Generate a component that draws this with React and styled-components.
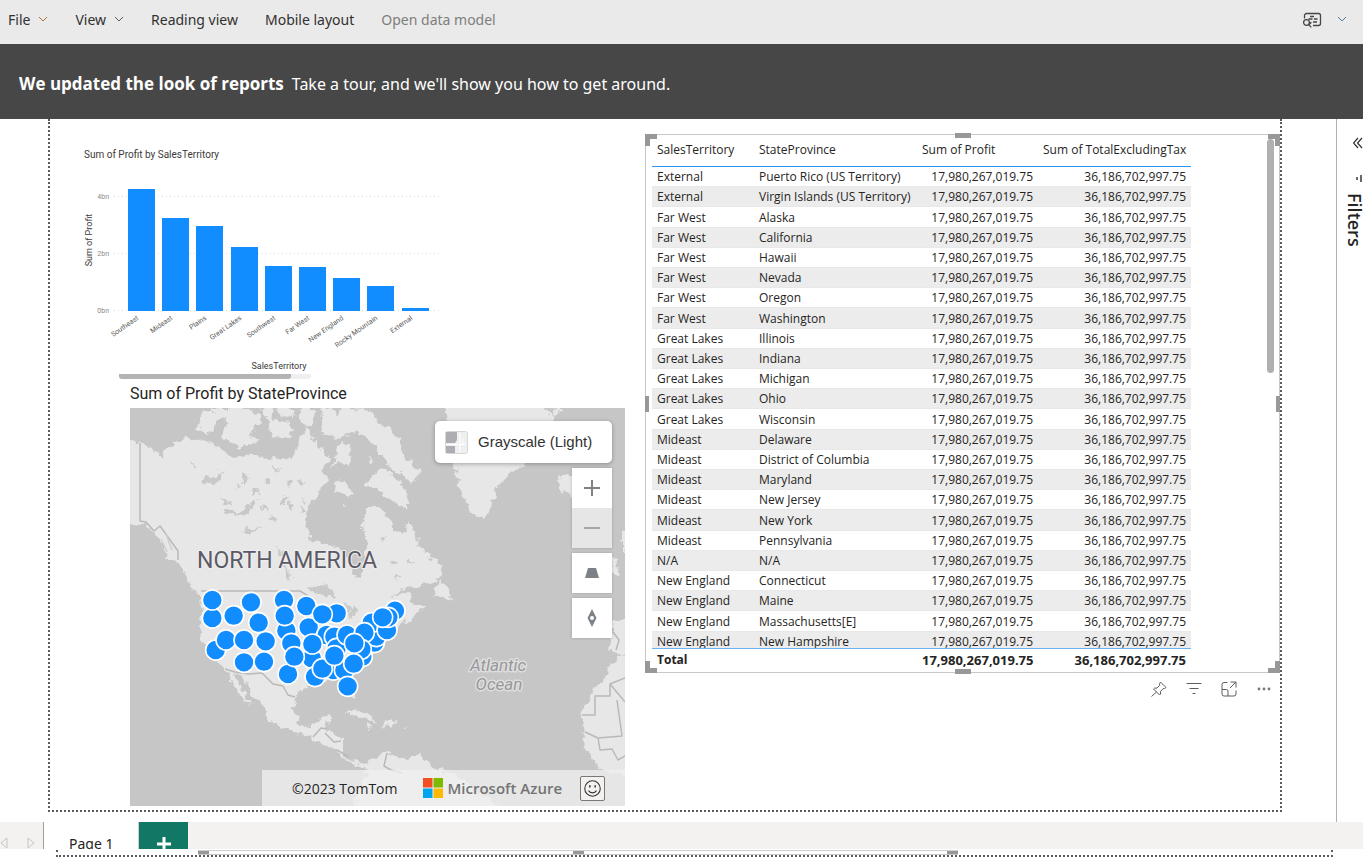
import React from "react";
import styled, { createGlobalStyle, css } from "styled-components";

const GlobalStyle = createGlobalStyle`
  *, *::before, *::after { box-sizing: border-box; }
  body { margin: 0; background: #fff; color: #252423; font-family: "Open Sans", "Noto Sans", sans-serif; font-size: 12px; }
  button { font: inherit; color: inherit; border: 0; background: none; padding: 0; margin: 0; cursor: pointer; }
  svg { display: block; }
`;

const DIN = `Roboto, "Liberation Sans", sans-serif`;
const UI = `"Noto Sans", "Open Sans", sans-serif`;

const App_ = styled.div`
  min-height: 100vh;
  display: flex;
  flex-direction: column;
  overflow: hidden;
`;

/* ---------- menu bar and banner ---------- */
const MenuBar = styled.nav`
  height: 44px;
  flex: none;
  display: flex;
  align-items: center;
  gap: 27px;
  padding: 0 16px 4px 8px;
  background: #eaeaea;
`;
const MenuButton = styled.button`
  display: flex;
  align-items: center;
  gap: 8px;
  font: 400 14px/20px ${UI};
  white-space: nowrap;
  color: ${(p) => (p.$muted ? "#7f7e7c" : "#323130")};
`;
const MenuTools = styled.div`
  margin-left: auto;
  display: flex;
  align-items: center;
  gap: 15px;
`;
const Banner = styled.section`
  height: 75px;
  flex: none;
  display: flex;
  align-items: center;
  gap: 8px;
  padding: 4px 19px 0;
  background: #474747;
  color: #fff;
  font: 400 16px/24px ${UI};
  white-space: nowrap;
`;
const BannerTitle = styled.strong`
  font: 700 17px/24px "Open Sans", sans-serif;
`;

/* ---------- workspace ---------- */
const Workspace = styled.main`
  flex: none;
  display: flex;
  height: 703px;
`;
const CanvasArea = styled.div`
  flex: 1;
  min-width: 0;
  padding: 0 54px 10px 48px;
`;
const ReportPage = styled.div`
  height: 100%;
  border: 2px dotted #5b5b5b;
  border-top: 0;
  display: grid;
  grid-template-columns: minmax(0, 595fr) minmax(0, 635fr);
`;
const LeftColumn = styled.div`
  padding: 28px 20px 5px 34px;
`;
const ChartTitle = styled.h2`
  margin: 0;
  font: 400 10px/16px ${DIN};
  color: #3b3a39;
`;
const ChartSvg = styled.svg`
  width: 356px;
  height: 211px;
  font-family: ${DIN};
`;
const HScroll = styled.div`
  width: 192px;
  height: 5px;
  margin-left: 35px;
  border-radius: 0 0 3px 3px;
  background: #efefef;
`;
const HThumb = styled.div`
  width: 172px;
  height: 5px;
  border-radius: 0 0 3px 3px;
  background: #b3b3b3;
`;
const MapVisual = styled.section`
  padding: 5px 0 0 46px;
`;
const MapTitle = styled.h2`
  margin: 0 0 4px;
  font: 400 16px/20px ${DIN};
  color: #252423;
`;
const MapFrame = styled.div`
  position: relative;
  height: 398px;
  overflow: hidden;
  background: #c6c6c6;
`;
const MapSvg = styled.svg`
  width: 100%;
  height: 100%;
  font-family: Roboto, sans-serif;
`;
const MapControls = styled.div`
  position: absolute;
  top: 13px;
  right: 13px;
  display: flex;
  flex-direction: column;
  align-items: flex-end;
  gap: 5px;
`;
const StyleButton = styled.button`
  display: flex;
  align-items: center;
  gap: 10px;
  height: 42px;
  width: 177px;
  padding: 0 10px;
  border-radius: 5px;
  background: #fff;
  box-shadow: 0 1px 4px rgba(0, 0, 0, 0.3);
  font: 400 15px/20px "Liberation Sans", sans-serif;
  color: #333;
`;
const ControlGroup = styled.div`
  width: 40px;
  box-shadow: 0 0 3px rgba(0, 0, 0, 0.2);
`;
const ControlButton = styled.button`
  width: 40px;
  height: 40px;
  display: flex;
  align-items: center;
  justify-content: center;
  background: ${(p) => (p.$off ? "#e6e6e6" : "#fff")};
`;
const Attribution = styled.div`
  position: absolute;
  right: 0;
  bottom: 0;
  height: 36px;
  width: 363px;
  display: flex;
  align-items: center;
  padding: 0 20px 0 30px;
  background: rgba(240, 240, 240, 0.75);
  font-size: 14px;
  color: #252423;
  white-space: nowrap;
`;
const Brand = styled.a`
  display: flex;
  align-items: center;
  gap: 5px;
  margin-left: 25px;
  color: #737373;
  font-size: 15px;
  font-weight: 600;
  text-decoration: none;
`;
const Feedback = styled.button`
  margin-left: auto;
  width: 25px;
  height: 25px;
  display: flex;
  align-items: center;
  justify-content: center;
  border: 1px solid #7a7876;
  border-radius: 2px;
  background: #f3f2f1;
`;

/* ---------- table visual ---------- */
const RightColumn = styled.div`
  padding-top: 15px;
`;
const TableVisual = styled.section`
  position: relative;
  height: 539px;
  border: 1px solid #c8c8c8;
  padding: 4px 5px 0 6px;
  display: flex;
  justify-content: space-between;
`;
const edge = {
  tl: css`top: -1px; left: -1px; width: 12px; height: 12px; border-width: 5px 0 0 5px;`,
  tr: css`top: -1px; right: -1px; width: 12px; height: 12px; border-width: 5px 5px 0 0;`,
  bl: css`bottom: -1px; left: -1px; width: 12px; height: 12px; border-width: 0 0 5px 5px;`,
  br: css`bottom: -1px; right: -1px; width: 12px; height: 12px; border-width: 0 5px 5px 0;`,
  t: css`top: -2px; left: calc(50% - 8px); width: 16px; border-width: 5px 0 0;`,
  b: css`bottom: -2px; left: calc(50% - 8px); width: 16px; border-width: 5px 0 0;`,
  l: css`left: -1px; top: calc(50% - 8px); height: 16px; border-width: 0 0 0 4px;`,
  r: css`right: -1px; top: calc(50% - 8px); height: 16px; border-width: 0 0 0 4px;`,
};
const Handle = styled.span`
  position: absolute;
  border: 0 solid #989898;
  ${(p) => edge[p.$at]}
`;
const TableScroll = styled.div`
  height: 531px;
  width: 539px;
  overflow: hidden;
`;
const DataTable = styled.table`
  width: 100%;
  height: 535px;
  table-layout: fixed;
  border-collapse: separate;
  border-spacing: 0;
  font-size: 12px;
  line-height: 16px;
  white-space: nowrap;
`;
const HeadCell = styled.th`
  height: 28px;
  padding: 0 6px 6px 5px;
  border-bottom: 1px solid #2f94f0;
  font-weight: 400;
  text-align: ${(p) => (p.$num ? "right" : "left")};
`;
const BodyRow = styled.tr`
  background: ${(p) => (p.$band ? "#ececec" : "#fff")};
`;
const Cell = styled.td`
  height: 20px;
  padding: 1px 5px 0 5px;
  border-bottom: 1px solid #e8e8e8;
  text-align: ${(p) => (p.$num ? "right" : "left")};
`;
const FootCell = styled.td`
  position: sticky;
  bottom: 0;
  height: 22px;
  padding: 0 5px;
  border-top: 1px solid #6ab4f7;
  background: #fff;
  font-size: ${(p) => (p.$num ? 13 : 12)}px;
  font-weight: 700;
  text-align: ${(p) => (p.$num ? "right" : "left")};
`;
const VThumb = styled.div`
  width: 7px;
  height: 234px;
  border-radius: 4px;
  background: #b0b0ae;
`;
const VisualActions = styled.div`
  display: flex;
  justify-content: flex-end;
  gap: 19px;
  padding: 8px 8px 0 0;
`;

/* ---------- filters rail ---------- */
const FiltersRail = styled.aside`
  width: 27px;
  flex: none;
  border-left: 1px solid #b3b0ad;
  padding-top: 18px;
  display: flex;
  flex-direction: column;
  align-items: flex-end;
`;
const RailTitle = styled.h2`
  margin: 10px 0 0;
  writing-mode: vertical-rl;
  font-size: 18px;
  line-height: 16px;
  font-weight: 600;
  color: #252423;
`;
const RailIcon = styled.div`
  margin-top: 24px;
`;

/* ---------- page tabs ---------- */
const TabStrip = styled.footer`
  flex: none;
  height: 27px;
  overflow: hidden;
  display: flex;
  align-items: flex-start;
  background: #f3f2f1;
`;
const TabArrows = styled.div`
  width: 44px;
  height: 42px;
  display: flex;
  align-items: center;
  justify-content: space-between;
  padding: 0 8px 0 0;
  border-right: 1px solid #a19f9d;
`;
const PageTab = styled.button`
  height: 43px;
  padding: 0 25px;
  background: #fff;
  border-right: 1px solid #d0cecc;
  font: 400 14px/20px ${UI};
`;
const AddTab = styled.button`
  width: 49px;
  height: 44px;
  display: flex;
  align-items: center;
  justify-content: center;
  background: #117865;
`;
const NextPage = styled.div`
  flex: none;
  height: 9px;
  padding: 1px 30px 0 56px;
`;
const NextPageEdge = styled.div`
  height: 7px;
  border: 2px dotted #5b5b5b;
  border-top: 0;
  padding-left: 140px;
`;
const NextVisualEdge = styled.div`
  width: 760px;
  height: 5px;
  display: flex;
  justify-content: space-between;
  border-top: 1px solid #d0d0d0;
  border-bottom: 1px solid #c8c8c8;
`;
const EdgeMark = styled.span`
  width: 11px;
  height: 3px;
  background: #989898;
`;

/* ---------- data ---------- */
const rows = [
  ["External", "Puerto Rico (US Territory)"],
  ["External", "Virgin Islands (US Territory)"],
  ["Far West", "Alaska"],
  ["Far West", "California"],
  ["Far West", "Hawaii"],
  ["Far West", "Nevada"],
  ["Far West", "Oregon"],
  ["Far West", "Washington"],
  ["Great Lakes", "Illinois"],
  ["Great Lakes", "Indiana"],
  ["Great Lakes", "Michigan"],
  ["Great Lakes", "Ohio"],
  ["Great Lakes", "Wisconsin"],
  ["Mideast", "Delaware"],
  ["Mideast", "District of Columbia"],
  ["Mideast", "Maryland"],
  ["Mideast", "New Jersey"],
  ["Mideast", "New York"],
  ["Mideast", "Pennsylvania"],
  ["N/A", "N/A"],
  ["New England", "Connecticut"],
  ["New England", "Maine"],
  ["New England", "Massachusetts[E]"],
  ["New England", "New Hampshire"],
];
const PROFIT = "17,980,267,019.75";
const TOTAL = "36,186,702,997.75";

const bars = [
  ["Southeast", 128, 189],
  ["Mideast", 162, 218],
  ["Plains", 196, 226],
  ["Great Lakes", 231, 247],
  ["Southwest", 265, 266],
  ["Far West", 299, 267],
  ["New England", 333, 278],
  ["Rocky Mountain", 367, 286],
  ["External", 402, 308],
];

const dots = [
  [262, 114], [262, 60], [272, 210], [303, 180], [326, 107], [378, 67], [422, 184], [357, 180],
  [357, 247], [417, 245], [401, 128], [477, 60], [484, 152], [479, 107], [499, 190], [489, 282],
  [560, 235], [508, 230], [544, 78], [551, 142], [605, 165], [570, 290], [625, 270], [592, 266],
  [562, 192], [635, 100], [592, 103], [628, 170], [635, 205], [712, 230], [658, 270], [628, 227],
  [748, 188], [754, 170], [666, 165], [740, 128], [718, 158], [709, 208], [688, 190], [686, 251],
  [668, 319], [786, 150], [810, 92], [790, 112], [773, 112],
];

/* ---------- drawings ---------- */
const Chevron = ({ color = "#605e5c" }) => (
  <svg width="10" height="10" viewBox="0 0 10 10" fill="none" stroke={color} aria-hidden="true">
    <path d="M1 2l4 4 4-4" />
  </svg>
);

function BarChart() {
  return (
    <ChartSvg viewBox="84 163 356 211" role="img" aria-label="Sum of Profit by SalesTerritory">
      {[["4bn", 197], ["2bn", 254], ["0bn", 311]].map(([t, y]) => (
        <g key={t}>
          <line x1="114" x2="439" y1={y - 0.5} y2={y - 0.5} stroke="#dcdcdc" strokeDasharray="1 3" />
          <text x="109" y={y + 2} fontSize="7" textAnchor="end" fill="#8a8886">{t}</text>
        </g>
      ))}
      {bars.map(([name, x, y]) => (
        <g key={name}>
          <rect x={x} y={y} width="27" height={311 - y} fill="#118dff" />
          <text
            fontSize="7"
            textAnchor="end"
            fill="#605e5c"
            transform={`translate(${x + 11} 319) rotate(-35)`}
          >
            {name}
          </text>
        </g>
      ))}
      <text fontSize="9" fill="#3b3a39" textAnchor="middle" transform="translate(92 240) rotate(-90)">Sum of Profit</text>
      <text fontSize="9" fill="#3b3a39" textAnchor="middle" x="279" y="369">SalesTerritory</text>
    </ChartSvg>
  );
}

function MapDrawing() {
  return (
    <MapSvg viewBox="130 408 495 398" preserveAspectRatio="xMinYMin slice" role="img" aria-label="Map of North America">
      <defs>
        <filter id="coast" x="-5%" y="-5%" width="110%" height="110%">
          <feTurbulence type="fractalNoise" baseFrequency="0.14" numOctaves="4" seed="4" />
          <feDisplacementMap in="SourceGraphic" scale="10" xChannelSelector="R" yChannelSelector="G" />
        </filter>
      </defs>
      <rect x="120" y="400" width="520" height="420" fill="#c6c6c6" />
      <g fill="#e7e7e7" filter="url(#coast)">
        <path d="M110 438L140 442 155 450 162 460 164 450 185 436 193 441 207 440 215 445 227 452 232 459 245 456 258 454 265 459 275 457 290 461 297 450 300 436 305 428 311 428 314 442 319 450 325 446 329 460 322 470 328 478 320 491 307 511 304 521 312 541 333 546 347 557 353 574 359 579 362 571 368 544 363 527 367 507 377 507 392 519 393 531 405 532 410 521 420 547 442 567 440 577 427 584 403 589 390 599 408 592 414 604 427 604 412 618 398 627 386 640 372 650 366 663 352 676 355 697 347 693 342 679 330 680 312 682 297 693 293 707 298 722 307 727 318 723 322 716 331 714 327 727 325 732 343 738 343 757 355 762 366 764 372 760 387 752 405 760 412 756 420 755 433 767 460 777 477 793 500 806 500 820 357 820 357 806 355 793 367 773 358 765 342 760 337 750 322 743 308 737 292 732 268 720 267 710 255 697 242 677 233 672 238 683 248 700 251 707 242 697 232 683 225 670 207 650 200 630 202 613 200 597 193 590 188 577 178 562 168 558 158 537 153 532 145 525 110 523Z" />
        <path d="M200 410L222 414 217 425 208 434 196 428 203 416ZM208 408L250 408 262 420 248 436 262 441 240 448 222 436 226 418ZM258 408L274 406 272 420 262 414ZM266 418L290 422 292 438 272 436ZM300 408L316 408 312 424 304 428 300 418ZM277 408L294 408 292 417 280 416Z" />
        <path d="M321 408L323 434 337 438 355 432 367 437 377 451 384 461 397 471 412 483 422 470 413 466 404 456 400 440 390 428 378 423 371 409 343 408 338 417 333 406ZM378 470L363 487 377 487 387 498 407 509 409 497 403 487 392 475 382 467ZM342 441L352 446 349 466 337 462 331 470 336 454ZM337 479L352 492 355 496 334 492ZM368 456L374 460 372 465 367 462ZM343 502L350 503 345 506Z" />
        <path d="M446 400L449 440 452 463 457 470 458 487 465 500 473 515 485 519 490 507 497 487 507 477 522 465 540 450 548 430 556 412 552 400ZM540 406L562 408 556 416 546 412ZM558 477L568 474 590 480 590 498 572 498 561 490Z" />
        <path d="M440 579L448 590 454 602 445 598 433 598ZM345 712L358 710 373 718 376 722 362 718ZM385 720L398 722 392 727 380 726ZM366 726L373 727 368 729ZM403 726L408 727 403 728Z" />
        <path d="M613 630L610 650 620 654 640 650 640 620 610 620ZM618 656L607 673 593 692 585 703 582 717 585 733 582 742 587 753 600 767 610 773 640 775 640 650ZM612 557L619 560 618 576 610 574ZM622 532L640 530 640 560 622 556Z" />
      </g>
      <g fill="#c9c9c9" filter="url(#coast)">
        <path d="M204 474L212 479 223 471 221 478 214 485 200 480ZM226 509L238 513 258 498 245 516 226 514ZM221 496L230 502 224 504ZM243 472L250 478 243 484ZM282 495L288 502 281 507ZM290 500L294 507 290 508ZM300 505L306 510 302 514ZM243 530L262 527 250 534ZM282 560L292 575 290 583ZM277 548L285 553 280 557ZM192 462L197 467 193 468ZM270 516L277 520 272 522ZM380 540L387 538 382 543ZM389 559L398 560 394 564 390 564ZM408 561L416 561 411 564ZM396 576L400 577 397 580ZM317 585L330 588 337 598 318 593 308 590ZM345 604L357 608 352 620ZM324 585L328 580 327 588ZM275 466L279 468 277 473ZM236 484L241 487 237 489ZM252 488L258 491 253 494ZM266 478L270 481 267 484ZM288 480L293 483 289 487ZM300 478L304 483 301 486ZM262 505L267 508 263 511ZM303 498L307 501 304 503Z" />
      </g>
      <g fill="none" stroke="#bcb8b8" strokeWidth="1.5" strokeLinejoin="round">
        <path d="M140 443V521L146 522 154 531 160 526 178 551 178 560M201 591H300L315 600M225 669L235 672 248 674 262 673 273 684 283 686 288 695 295 697M313 737L321 728 327 729M325 733L334 742 341 741M337 750L349 757M387 753L384 766 391 770 402 773" />
        <path d="M582 715H595V696H610V684L625 678M610 684L625 702M617 700L622 736 598 738 585 732M598 738L600 750 612 749 618 760 625 756M613 632L619 640 616 650" />
        <path d="M161 539L167 552M166 534L172 550" stroke="#d0cdcd" />
      </g>
      <g strokeLinejoin="round">
        <text x="197" y="568" fontSize="23" fill="#5c5a66" stroke="#efefef" strokeWidth="2" paintOrder="stroke">NORTH AMERICA</text>
        <g fontSize="17" fontStyle="italic" fill="#98989a" stroke="#dedede" strokeWidth="3" textAnchor="middle" paintOrder="stroke">
          <text x="498" y="671">Atlantic</text>
          <text x="499" y="690">Ocean</text>
        </g>
      </g>
      <g fill="#118dff" stroke="#fff" strokeWidth="1.6">
        {dots.map(([x, y]) => (
          <circle key={`${x}-${y}`} cx={125 + x / 3} cy={580 + y / 3} r="10" />
        ))}
      </g>
    </MapSvg>
  );
}

export default function App() {
  return (
    <App_>
      <GlobalStyle />
      <MenuBar>
        <MenuButton>File <Chevron color="#b06f2c" /></MenuButton>
        <MenuButton>View <Chevron /></MenuButton>
        <MenuButton>Reading view</MenuButton>
        <MenuButton>Mobile layout</MenuButton>
        <MenuButton $muted>Open data model</MenuButton>
        <MenuTools>
          <MenuButton aria-label="Comments">
            <svg width="20" height="16" viewBox="0 0 20 16" fill="none" stroke="#484644" strokeWidth="1.3">
              <path d="M2.500 6.500V3.500a2 2 0 0 1 2-2H16.500a2 2 0 0 1 2 2V11.500a2 2 0 0 1-2 2H11M8 4.500h4M6.500 7h4M12 7h3.500M11 10h4" />
              <circle cx="4.500" cy="10.500" r="2.900" />
              <path d="M6.500 12.500c2 0 1.500-2 3-2M6.700 12.600l2.600 2.800" />
            </svg>
          </MenuButton>
          <MenuButton aria-label="More"><Chevron color="#4a7ea0" /></MenuButton>
        </MenuTools>
      </MenuBar>

      <Banner>
        <BannerTitle>We updated the look of reports</BannerTitle>
        <span>Take a tour, and we'll show you how to get around.</span>
      </Banner>

      <Workspace>
        <CanvasArea>
          <ReportPage>
            <LeftColumn>
              <ChartTitle>Sum of Profit by SalesTerritory</ChartTitle>
              <BarChart />
              <HScroll><HThumb /></HScroll>
              <MapVisual>
                <MapTitle>Sum of Profit by StateProvince</MapTitle>
                <MapFrame>
                  <MapDrawing />
                  <MapControls>
                    <StyleButton>
                      <svg width="23" height="23" viewBox="0 0 23 23" aria-hidden="true">
                        <rect x=".5" y=".5" width="22" height="22" rx="2" fill="#efefef" stroke="#d6d6d6" />
                        <path d="M1 1h11v8l-2 3H1zM1 15h9v7H1z" fill="#adadb3" />
                        <path d="M1 13.500h20M15 2v19M18 8v6" stroke="#fff" fill="none" />
                      </svg>
                      Grayscale (Light)
                    </StyleButton>
                    <ControlGroup>
                      <ControlButton aria-label="Zoom in">
                        <svg width="16" height="16" stroke="#7d8288" strokeWidth="2"><path d="M0 8h16M8 0v16" /></svg>
                      </ControlButton>
                      <ControlButton $off aria-label="Zoom out">
                        <svg width="16" height="16" stroke="#a2a4a6" strokeWidth="2"><path d="M0 8h16" /></svg>
                      </ControlButton>
                    </ControlGroup>
                    <ControlGroup>
                      <ControlButton aria-label="Pitch">
                        <svg width="14" height="10" fill="#7d8288"><path d="M3 0h8l3 10H0z" /></svg>
                      </ControlButton>
                    </ControlGroup>
                    <ControlGroup>
                      <ControlButton aria-label="Rotate">
                        <svg width="10" height="18" fill="#7d8288"><path fillRule="evenodd" d="M5 0l4.500 9L5 18 .5 9zM5 7a2 2 0 1 0 0 4 2 2 0 0 0 0-4z" /></svg>
                      </ControlButton>
                    </ControlGroup>
                  </MapControls>
                  <Attribution>
                    ©2023 TomTom
                    <Brand href="#azure">
                      <svg width="20" height="20" aria-hidden="true">
                        <path fill="#f25022" d="M0 0h9.500v9.500H0z" />
                        <path fill="#7fba00" d="M10.500 0H20v9.500h-9.500z" />
                        <path fill="#00a4ef" d="M0 10.500h9.500V20H0z" />
                        <path fill="#ffb900" d="M10.500 10.500H20V20h-9.500z" />
                      </svg>
                      Microsoft Azure
                    </Brand>
                    <Feedback aria-label="Feedback">
                      <svg width="17" height="17" viewBox="0 0 16 16" fill="none" stroke="#323130">
                        <circle cx="8" cy="8" r="7.300" />
                        <path d="M4.200 10c1.700 2.800 5.900 2.800 7.600 0" />
                        <path d="M5.500 5v2M10.500 5v2" strokeWidth="1.400" />
                      </svg>
                    </Feedback>
                  </Attribution>
                </MapFrame>
              </MapVisual>
            </LeftColumn>

            <RightColumn>
              <TableVisual>
                <TableScroll>
                  <DataTable>
                    <colgroup>
                      <col style={{ width: 102 }} />
                      <col style={{ width: 163 }} />
                      <col style={{ width: 121 }} />
                      <col />
                    </colgroup>
                    <thead>
                      <tr>
                        <HeadCell>SalesTerritory</HeadCell>
                        <HeadCell>StateProvince</HeadCell>
                        <HeadCell>Sum of Profit</HeadCell>
                        <HeadCell $num>Sum of TotalExcludingTax</HeadCell>
                      </tr>
                    </thead>
                    <tbody>
                      {rows.map(([territory, state], i) => (
                        <BodyRow key={state} $band={i % 2 === 1}>
                          <Cell>{territory}</Cell>
                          <Cell>{state}</Cell>
                          <Cell $num>{PROFIT}</Cell>
                          <Cell $num>{TOTAL}</Cell>
                        </BodyRow>
                      ))}
                    </tbody>
                    <tfoot>
                      <tr>
                        <FootCell>Total</FootCell>
                        <FootCell />
                        <FootCell $num>{PROFIT}</FootCell>
                        <FootCell $num>{TOTAL}</FootCell>
                      </tr>
                    </tfoot>
                  </DataTable>
                </TableScroll>
                <VThumb />
                {["tl", "t", "tr", "l", "r", "bl", "b", "br"].map((at) => (
                  <Handle key={at} $at={at} />
                ))}
              </TableVisual>
              <VisualActions>
                <button aria-label="Pin visual">
                  <svg width="16" height="16" viewBox="0 0 16 16" fill="none" stroke="#605e5c" strokeLinejoin="round">
                    <path d="M9.500 1l5.500 5.500-1.500 1-1.500.2-2.500 2.800v2.500L8.500 14 2.500 8l1-.9H6L8.500 4.500l.2-2zM5.500 11L.5 15.500" />
                  </svg>
                </button>
                <button aria-label="Filters on visual">
                  <svg width="16" height="16" stroke="#605e5c"><path d="M.5 2.500h15M3.500 7.500h9M6.500 12.500h3" /></svg>
                </button>
                <button aria-label="Focus mode">
                  <svg width="16" height="16" viewBox="0 0 16 16" fill="none" stroke="#605e5c">
                    <path d="M6.500 1.500H3a2 2 0 0 0-2 2V13a2 2 0 0 0 2 2h10a2 2 0 0 0 2-2V9.500M1 8.500h4.500a1.500 1.500 0 0 1 1.500 1.500v5M9.500 1H15v5.500M15 1L9 7" />
                  </svg>
                </button>
                <button aria-label="More options">
                  <svg width="16" height="16" fill="#7a7876">
                    <circle cx="3" cy="8" r="1.400" /><circle cx="8" cy="8" r="1.400" /><circle cx="13" cy="8" r="1.400" />
                  </svg>
                </button>
              </VisualActions>
            </RightColumn>
          </ReportPage>
        </CanvasArea>

        <FiltersRail>
          <button aria-label="Expand filters">
            <svg width="10" height="12" viewBox="4 0 10 12" fill="none" stroke="#323130" strokeWidth="1.200">
              <path d="M9 1L4.500 6 9 11M13 1L8.500 6 13 11" />
            </svg>
          </button>
          <RailIcon>
            <svg width="8" height="10" stroke="#6b6967" strokeWidth="2"><path d="M2 4v3M6 2v7" /></svg>
          </RailIcon>
          <RailTitle>Filters</RailTitle>
        </FiltersRail>
      </Workspace>

      <TabStrip>
        <TabArrows>
          <button aria-label="Previous page">
            <svg width="8" height="12" fill="none" stroke="#c8c6c4"><path d="M7 1v10L1 6z" /></svg>
          </button>
          <button aria-label="Next page">
            <svg width="8" height="12" fill="none" stroke="#c8c6c4"><path d="M1 1v10l6-5z" /></svg>
          </button>
        </TabArrows>
        <PageTab>Page 1</PageTab>
        <AddTab aria-label="New page">
          <svg width="14" height="14" stroke="#fff" strokeWidth="3"><path d="M0 7h14M7 0v14" /></svg>
        </AddTab>
      </TabStrip>
      <NextPage>
        <NextPageEdge>
          <NextVisualEdge><EdgeMark /><EdgeMark /><EdgeMark /></NextVisualEdge>
        </NextPageEdge>
      </NextPage>
    </App_>
  );
}
